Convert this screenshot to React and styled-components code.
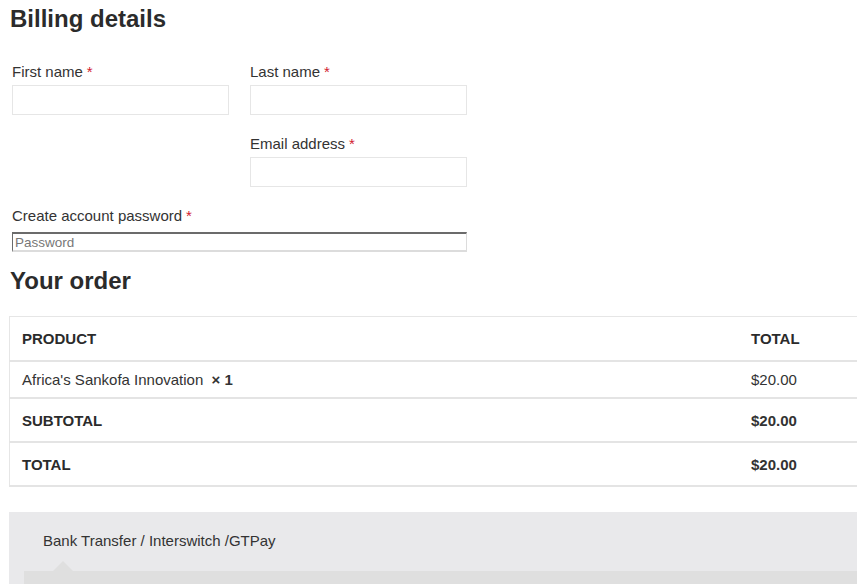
import React from 'react';
import styled, { createGlobalStyle } from 'styled-components';

const GlobalStyle = createGlobalStyle`
    html, body {
        margin: 0;
        padding: 0;
        background: #fff;
        overflow: hidden;
    }
    body {
        font-family: "Liberation Sans", Arial, sans-serif;
        color: #333;
        font-size: 15px;
    }
`;

const Page = styled.div`
    padding: 5px 0 0 9px;
    width: 900px;
`;

const Heading = styled.h3`
    margin: 0 0 0 1px;
    font-size: 24px;
    font-weight: bold;
    line-height: 28px;
    color: #2b2b2b;
`;

const FormGrid = styled.div`
    display: grid;
    grid-template-columns: 217px 217px;
    column-gap: 21px;
    padding: 30px 0 0 3px;
    row-gap: 20px;
`;

const Field = styled.div`
    display: flex;
    flex-direction: column;
    grid-column: ${props => props.$col || 'auto'};
`;

const Label = styled.label`
    font-size: 15px;
    line-height: 17px;
    color: #333;
    margin-bottom: 5px;
`;

const Req = styled.span`
    color: #d2202f;
    margin-left: 4px;
`;

const TextInput = styled.input`
    box-sizing: border-box;
    height: 30px;
    width: 100%;
    border: 1px solid #e6e6e6;
    background: #fff;
    outline: none;
`;

const PasswordInput = styled.input`
    box-sizing: border-box;
    width: 100%;
    height: 20px;
    margin-top: 3px;
    padding: 0 2px;
    border-style: solid;
    border-width: 2px 1px 2px 1px;
    border-color: #6b6b6b #dcdcdc #dcdcdc #6b6b6b;
    font-family: "Liberation Sans", Arial, sans-serif;
    font-size: 13.5px;
    color: #333;
    outline: none;
    &::placeholder {
        color: #777;
    }
`;

const OrderHeading = styled(Heading)`
    margin-top: 15px;
`;

const Table = styled.table`
    margin-top: 21px;
    width: 890px;
    border-collapse: collapse;
    border: 1px solid #e6e6e6;
    font-size: 15px;
`;

const Th = styled.th`
    text-align: left;
    font-weight: bold;
    text-transform: uppercase;
    padding: 0 12px;
    height: ${props => props.$h || 43}px;
    border-bottom: 2px solid #e4e4e4;
    width: ${props => props.$w || 'auto'};
    color: #2b2b2b;
`;

const Td = styled.td`
    padding: 0 12px;
    height: 35px;
    border-bottom: 2px solid #e4e4e4;
    font-weight: ${props => (props.$bold ? 'bold' : 'normal')};
`;

const Qty = styled.strong`
    margin-left: 4px;
    font-weight: bold;
`;

const Payment = styled.div`
    margin-top: 25px;
    background: #e9e9eb;
    width: 900px;
    padding: 20px 0 0 15px;
    height: 60px;
`;

const MethodLabel = styled.div`
    padding-left: 19px;
    line-height: 18px;
    font-size: 15px;
`;

const PaymentBox = styled.div`
    position: relative;
    margin-top: 21px;
    height: 30px;
    background: #dfdfdf;
    &::before {
        content: '';
        position: absolute;
        left: 29px;
        top: -10px;
        border-left: 10px solid transparent;
        border-right: 10px solid transparent;
        border-bottom: 10px solid #dfdfdf;
    }
`;

export default function App() {
    return (
        <Page>
            <GlobalStyle />
            <Heading>Billing details</Heading>
            <FormGrid>
                <Field>
                    <Label>First name<Req>*</Req></Label>
                    <TextInput />
                </Field>
                <Field>
                    <Label>Last name<Req>*</Req></Label>
                    <TextInput />
                </Field>
                <Field $col="2">
                    <Label>Email address<Req>*</Req></Label>
                    <TextInput />
                </Field>
                <Field $col="1 / span 2">
                    <Label>Create account password<Req>*</Req></Label>
                    <PasswordInput placeholder="Password" type="password" />
                </Field>
            </FormGrid>
            <OrderHeading>Your order</OrderHeading>
            <Table>
                <thead>
                    <tr>
                        <Th $w="705px">Product</Th>
                        <Th>Total</Th>
                    </tr>
                </thead>
                <tbody>
                    <tr>
                        <Td>Africa's Sankofa Innovation <Qty>× 1</Qty></Td>
                        <Td>$20.00</Td>
                    </tr>
                </tbody>
                <tfoot>
                    <tr>
                        <Th $h={42}>Subtotal</Th>
                        <Td $bold>$20.00</Td>
                    </tr>
                    <tr>
                        <Th $h={42}>Total</Th>
                        <Td $bold>$20.00</Td>
                    </tr>
                </tfoot>
            </Table>
            <Payment>
                <MethodLabel>Bank Transfer / Interswitch /GTPay</MethodLabel>
                <PaymentBox />
            </Payment>
        </Page>
    );
}
